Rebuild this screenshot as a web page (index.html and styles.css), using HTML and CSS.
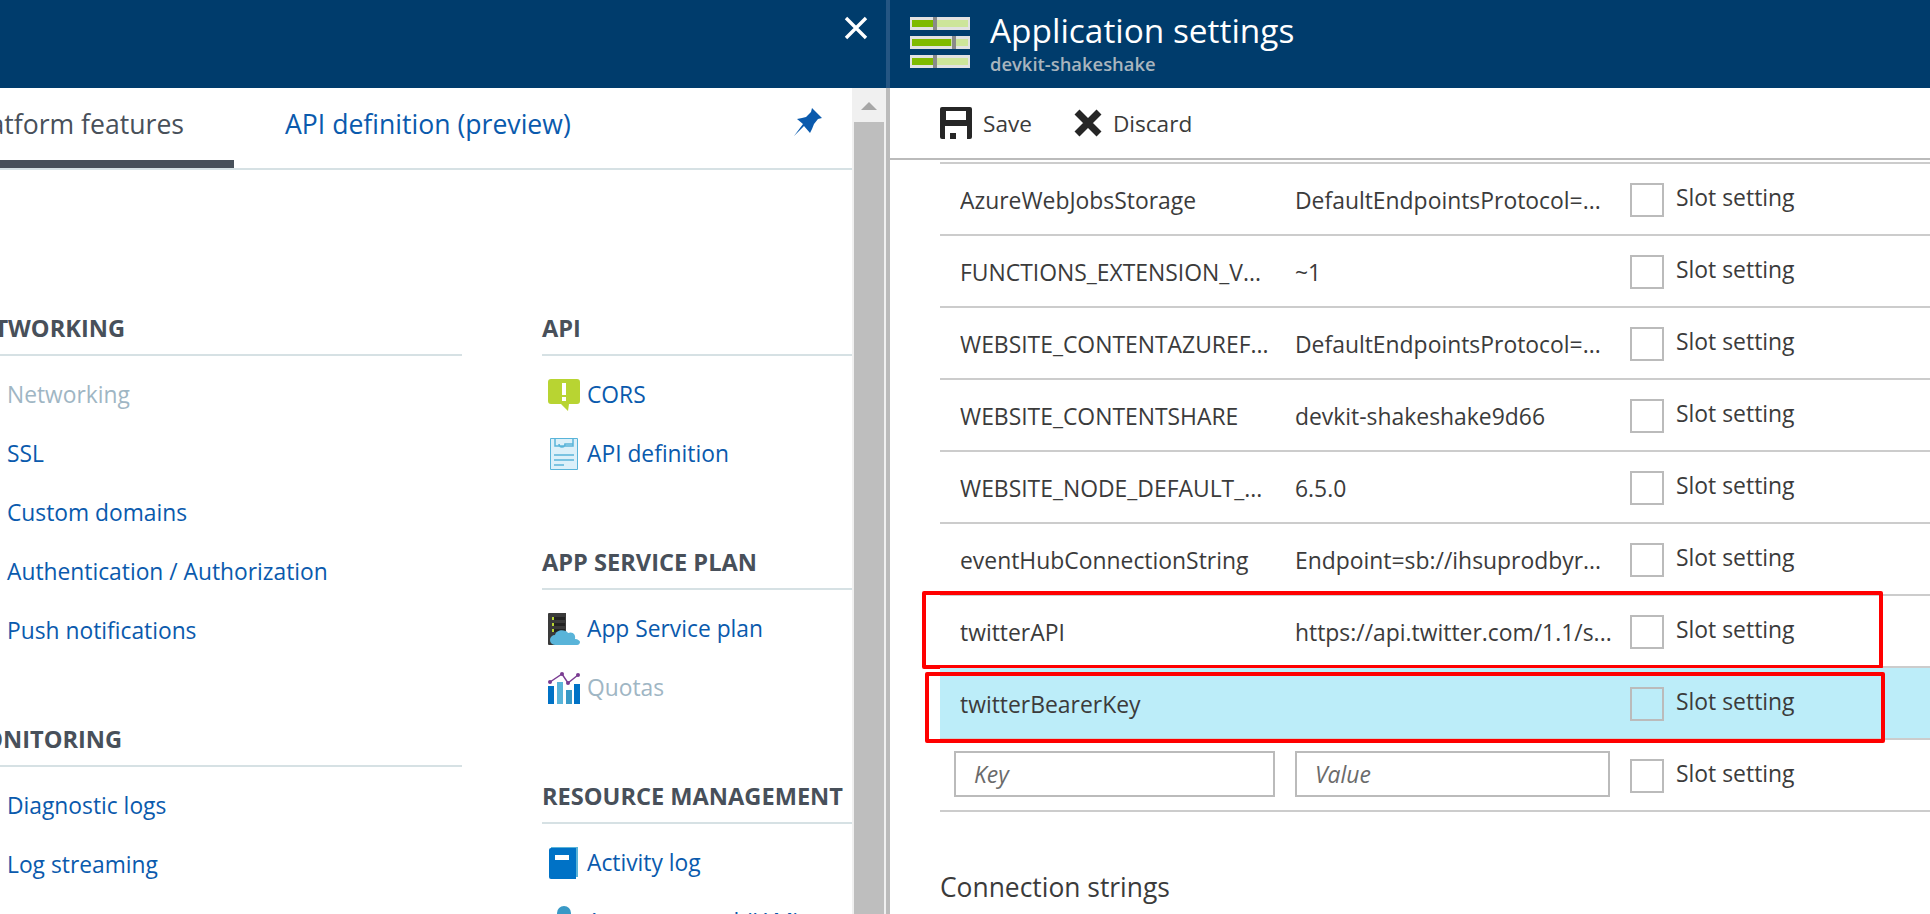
FILE: index.html
```html
<!DOCTYPE html>
<html lang="en">
<head>
    <meta charset="UTF-8">
    <title>Application settings</title>
    <link rel="stylesheet" href="styles.css">
</head>
<body>

<div class="blades">

    <section class="blade-left">
        <header class="top-left">
            <svg class="close" width="24" height="24" viewBox="0 0 24 24"><path d="M2 2L22 22M22 2L2 22" stroke="#fff" stroke-width="3.4"/></svg>
        </header>
        <div class="left-body">
            <div class="left-main">
                <div class="tabs">
                    <div class="tab active">Platform features</div>
                    <div class="tab">API definition (preview)</div>
                    <svg class="pin" width="28" height="28" viewBox="0 0 28 28"><path d="M18 0L28 10L24 11L20 16L18 21L16 25L10 18L0 28L9 16L3 11L8 10L12 9L17 4Z" fill="#0a5aad"/></svg>
                </div>
                <div class="menu">
                    <div class="menu-col col-a">
                        <h3>NETWORKING</h3>
                        <ul>
                            <li class="off">Networking</li>
                            <li>SSL</li>
                            <li>Custom domains</li>
                            <li>Authentication / Authorization</li>
                            <li>Push notifications</li>
                        </ul>
                        <h3 class="later">MONITORING</h3>
                        <ul>
                            <li>Diagnostic logs</li>
                            <li>Log streaming</li>
                        </ul>
                    </div>
                    <div class="menu-col col-b">
                        <h3>API</h3>
                        <ul>
                            <li><svg width="32" height="32" viewBox="0 0 32 32"><path d="M3 0h26a3 3 0 0 1 3 3v19a3 3 0 0 1-3 3H21l-1 7-7-7H3a3 3 0 0 1-3-3V3a3 3 0 0 1 3-3z" fill="#b8d432"/><path d="M14 4h4v12h-4zM14 18h4v4h-4z" fill="#fff"/></svg>CORS</li>
                            <li><svg width="32" height="32" viewBox="0 0 32 32"><path d="M2.500.500h27v31h-27z" fill="#dcf0f9" stroke="#59b4d9"/><path d="M7 1v7h18V1M11 6a3 3 0 1 0 6 0h8M6 17h20M6 22h20M6 27h10" fill="none" stroke="#59b4d9" stroke-width="1.500"/></svg>API definition</li>
                        </ul>
                        <h3 class="later">APP SERVICE PLAN</h3>
                        <ul>
                            <li><svg width="32" height="32" viewBox="0 0 32 32"><path d="M0 1a1 1 0 0 1 1-1h17v32H1a1 1 0 0 1-1-1z" fill="#3a3a3a"/><path d="M4 4h13v3H4zM4 10h13v3H4zM4 16h13v3H4z" fill="#222"/><path d="M4 4h2v3H4zM4 10h2v3H4zM4 16h2v3H4z" fill="#b8d432"/><path d="M7 32a5 5 0 0 1 0-10c1-6 11-6 13-2 5-2 8 2 7 6 3 0 5 2 5 3s-1 3-3 3z" fill="#59b4d9"/></svg>App Service plan</li>
                            <li class="off"><svg width="32" height="32" viewBox="0 0 32 32"><path d="M0 14h6v18H0zM9 10h6v22H9zM18 18h6v14h-6zM26 12h6v20h-6z" fill="#0072c6"/><path d="M9 10h6v22H9z" fill="#59b4d9"/><path d="M18 18h6v14h-6z" fill="#3999c6"/><path d="M2 10L14 2l6 9 10-8" fill="none" stroke="#7a3b92" stroke-width="1.500"/><circle cx="2" cy="10" r="2" fill="#7a3b92"/><circle cx="14" cy="2" r="2" fill="#7a3b92"/><circle cx="20" cy="11" r="2" fill="#7a3b92"/><circle cx="30" cy="3" r="2" fill="#7a3b92"/></svg>Quotas</li>
                        </ul>
                        <h3 class="later">RESOURCE MANAGEMENT</h3>
                        <ul>
                            <li><svg width="32" height="32" viewBox="0 0 32 32"><path d="M3 0h27v30H3z" fill="#59b4d9"/><path d="M1 3a2 2 0 0 1 2-2h25v31H3a2 2 0 0 1-2-2z" fill="#0072c6"/><path d="M7 8h14v5H7z" fill="#fff"/></svg>Activity log</li>
                            <li><svg width="32" height="32" viewBox="0 0 32 32"><circle cx="16" cy="7" r="7" fill="#3999c6"/><path d="M4 32c0-10 6-14 12-14s12 4 12 14z" fill="#59b4d9"/></svg>Access control (IAM)</li>
                        </ul>
                    </div>
                </div>
            </div>
            <div class="scrollbar">
                <div class="scroll-up"><span class="arrow"></span></div>
                <div class="scroll-thumb"></div>
            </div>
        </div>
    </section>

    <section class="blade-right">
        <header class="top-right">
            <svg class="app-icon" width="60" height="51" viewBox="0 0 60 51">
                <path d="M0 0h60v13H0zM0 19h60v13H0zM0 38h60v13H0z" fill="#e2e2e2"/>
                <path d="M2 3h56v7H2zM2 22h56v7H2zM2 41h56v7H2z" fill="#cde59a"/>
                <path d="M2 3h21v7H2zM2 22h39v7H2zM2 41h21v7H2z" fill="#7fba00"/>
                <path d="M23 0h4v13h-4zM42 19h4v13h-4zM23 38h4v13h-4z" fill="#8a8a8a"/>
            </svg>
            <div>
                <h1>Application settings</h1>
                <div class="subtitle">devkit-shakeshake</div>
            </div>
        </header>
        <div class="toolbar">
            <button class="tool">
                <svg width="32" height="32" viewBox="0 0 32 32"><path d="M2 0h28a2 2 0 0 1 2 2v28a2 2 0 0 1-2 2H2a2 2 0 0 1-2-2V2a2 2 0 0 1 2-2z" fill="#262626"/><path d="M6 4h20v9H6z" fill="#fff"/><path d="M5 19h22v13H5z" fill="#fff"/><path d="M10 26h6v6h-6z" fill="#262626"/></svg>
                Save
            </button>
            <button class="tool">
                <svg width="28" height="28" viewBox="0 0 28 28"><path d="M3 3L25 25M25 3L3 25" stroke="#262626" stroke-width="7"/></svg>
                Discard
            </button>
        </div>
        <div class="settings">
            <div class="row"><span class="key">AzureWebJobsStorage</span><span class="val">DefaultEndpointsProtocol=...</span><label class="slot"><i></i>Slot setting</label></div>
            <div class="row"><span class="key">FUNCTIONS_EXTENSION_V...</span><span class="val">~1</span><label class="slot"><i></i>Slot setting</label></div>
            <div class="row"><span class="key">WEBSITE_CONTENTAZUREF...</span><span class="val">DefaultEndpointsProtocol=...</span><label class="slot"><i></i>Slot setting</label></div>
            <div class="row"><span class="key">WEBSITE_CONTENTSHARE</span><span class="val">devkit-shakeshake9d66</span><label class="slot"><i></i>Slot setting</label></div>
            <div class="row"><span class="key">WEBSITE_NODE_DEFAULT_...</span><span class="val">6.5.0</span><label class="slot"><i></i>Slot setting</label></div>
            <div class="row"><span class="key">eventHubConnectionString</span><span class="val">Endpoint=sb://ihsuprodbyr...</span><label class="slot"><i></i>Slot setting</label></div>
            <div class="row"><span class="key">twitterAPI</span><span class="val">https://api.twitter.com/1.1/s...</span><label class="slot"><i></i>Slot setting</label><div class="red-box box-one"></div></div>
            <div class="row selected"><span class="key">twitterBearerKey</span><span class="val"></span><label class="slot"><i></i>Slot setting</label><div class="red-box box-two"></div></div>
            <div class="row new-row"><input class="field key-field" placeholder="Key"><input class="field val-field" placeholder="Value"><label class="slot"><i></i>Slot setting</label></div>
        </div>
        <h2>Connection strings</h2>
    </section>

</div>

</body>
</html>
```

FILE: styles.css
```css
* {
    margin: 0;
    padding: 0;
    box-sizing: border-box;
    font-family: 'Open Sans', 'Noto Sans', sans-serif;
}

html, body {
    height: 100%;
    overflow: hidden;
}

body {
    background: white;
    color: #3b3b3b;
}

.blades {
    display: flex;
    height: 914px;
    overflow: hidden;
}

/* left blade */
.blade-left {
    width: 886px;
    flex: none;
    overflow: hidden;
}

.top-left {
    height: 88px;
    background: #003c6c;
    display: flex;
    justify-content: flex-end;
    padding: 16px 18px 0 0;
}

.left-body {
    display: flex;
    height: 826px;
}

.left-main {
    width: 852px;
    flex: none;
    overflow: hidden;
}

.scrollbar {
    width: 34px;
    background: #f0f0f0;
}

.scroll-up {
    height: 34px;
    padding: 14px 0 0 9px;
}

.arrow {
    display: block;
    width: 0;
    height: 0;
    border-left: 8px solid transparent;
    border-right: 8px solid transparent;
    border-bottom: 8px solid #a6a6a6;
}

.scroll-thumb {
    margin-left: 2px;
    width: 30px;
    height: 800px;
    background: #bebebe;
}

.tabs {
    height: 82px;
    display: flex;
    align-items: flex-start;
    border-bottom: 2px solid #d6e1e4;
    position: relative;
}

.tab {
    font-size: 26.6px;
    color: #0a5aad;
    height: 80px;
    padding-top: 18px;
    white-space: nowrap;
}

.tab.active {
    color: #48505a;
    width: 234px;
    margin-right: 51px;
    display: flex;
    justify-content: flex-end;
    padding-right: 50px;
    border-bottom: 8px solid #48505a;
}

.pin {
    position: absolute;
    left: 794px;
    top: 20px;
}

.menu {
    display: flex;
}

.menu-col h3 {
    font-size: 23.6px;
    font-weight: 700;
    color: #48505a;
    height: 54px;
    padding-top: 10px;
    border-bottom: 2px solid #d6e1e4;
    white-space: nowrap;
}

.menu-col h3.later {
    margin-top: 53px;
}

/* the column starts left of the window, like the scrolled blade */
.col-a {
    width: 500px;
    margin-left: -38px;
    padding-top: 132px;
}

.col-b {
    width: 310px;
    margin-left: 80px;
    padding-top: 132px;
}

.menu-col ul {
    list-style: none;
    padding-top: 9px;
}

.menu-col li {
    height: 59px;
    font-size: 22.8px;
    color: #0a5aad;
    display: flex;
    align-items: center;
    white-space: nowrap;
}

.menu-col li.off {
    color: #9fb6c4;
}

.col-a li {
    padding-left: 45px;
}

.col-b li {
    padding-left: 6px;
}

.col-b li svg {
    margin-right: 7px;
    flex: none;
}

/* right blade */
.blade-right {
    flex: 1;
    border-left: 4px solid #bbb;
    min-width: 0;
}

.top-right {
    height: 88px;
    background: #003c6c;
    margin-left: -4px;
    border-left: 4px solid #255683;
    display: flex;
    padding: 17px 0 0 20px;
    gap: 20px;
}

.top-right h1 {
    font-size: 33.4px;
    font-weight: 400;
    color: white;
    line-height: 44px;
    margin-top: -9px;
}

.subtitle {
    font-size: 18.4px;
    font-weight: 600;
    color: #a9b5be;
    line-height: 22px;
    margin-top: 1px;
}

.toolbar {
    height: 72px;
    display: flex;
    align-items: center;
    padding-left: 50px;
    gap: 42px;
    border-bottom: 2px solid #bbb;
}

.tool {
    display: flex;
    align-items: center;
    gap: 11px;
    background: none;
    border: none;
    font-size: 22.6px;
    color: #3b3b3b;
}

.settings {
    margin: 2px 0 0 50px;
    border-top: 2px solid #ccc;
}

.row {
    height: 72px;
    border-bottom: 2px solid #ccc;
    display: flex;
    align-items: center;
    font-size: 22.9px;
    padding-left: 20px;
    position: relative;
    white-space: nowrap;
}

.row.selected {
    background: #bcedf9;
}

.key {
    width: 335px;
    flex: none;
    overflow: hidden;
    margin-top: 2px;
}

.val {
    width: 335px;
    flex: none;
    overflow: hidden;
    margin-top: 2px;
}

.slot {
    display: flex;
    align-items: center;
    gap: 12px;
    margin-top: -2px;
    line-height: 30px;
}

.slot i {
    width: 34px;
    height: 34px;
    border: 2px solid #bbb;
    flex: none;
    margin-top: 3px;
}

.new-row {
    padding-left: 14px;
}

.field {
    height: 46px;
    border: 2px solid #bbb;
    font-size: 22.9px;
    padding-left: 18px;
    font-style: italic;
    margin-top: -2px;
    background: white;
}

.field::placeholder {
    color: #6b6b6b;
}

.key-field {
    width: 321px;
    margin-right: 20px;
}

.val-field {
    width: 315px;
    margin-right: 20px;
}

.red-box {
    position: absolute;
    border: 4px solid #f00;
    border-radius: 2px;
}

.box-one {
    left: -18px;
    top: -5px;
    width: 961px;
    height: 78px;
}

.box-two {
    left: -15px;
    top: 4px;
    width: 960px;
    height: 71px;
}

h2 {
    font-size: 26.4px;
    font-weight: 400;
    color: #3b3b3b;
    margin: 57px 0 0 50px;
}
```
